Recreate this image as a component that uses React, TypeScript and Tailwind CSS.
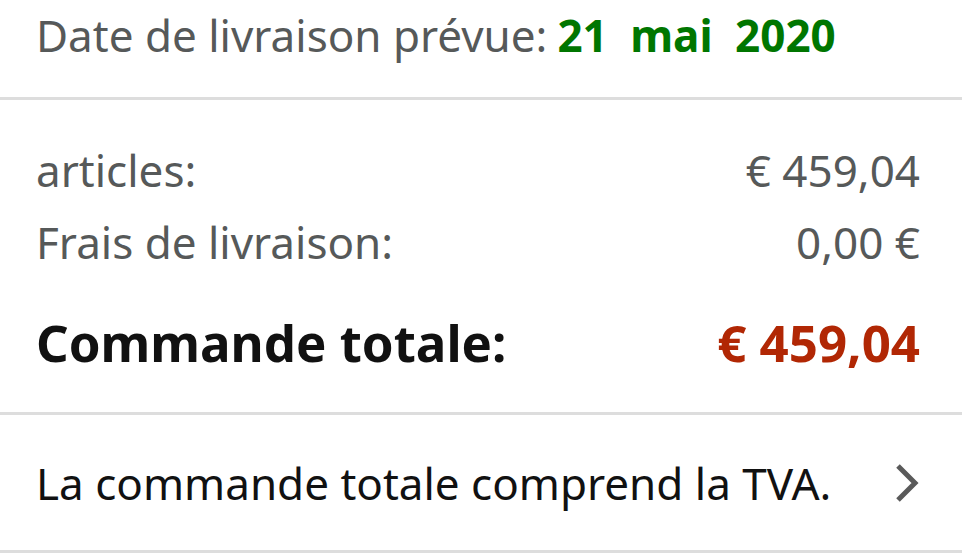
export default function App() {
  return (
    <div
      className="w-[962px] h-[553px] overflow-hidden bg-white"
      style={{ fontFamily: '"Noto Sans", "Open Sans", sans-serif' }}
    >
      <div className="h-[97px] flex items-center pb-[28px] px-[36px] text-[44px] text-[#565959]">
        <span>Date de livraison prévue:</span>
        <span className="ml-[10px] font-bold text-[#007600] [word-spacing:11px]">21 mai 2020</span>
      </div>
      <div className="h-[3px] bg-[#dddddd]" />

      <div className="h-[312px] flex flex-col px-[36px] pr-[42px] pt-[42px]">
        <div className="flex justify-between items-center h-[56px] text-[44px] text-[#565959]">
          <span>articles:</span>
          <span>€ 459,04</span>
        </div>
        <div className="flex justify-between items-center h-[56px] mt-[16px] text-[44px] text-[#565959]">
          <span>Frais de livraison:</span>
          <span>0,00 €</span>
        </div>
        <div className="flex justify-between items-center h-[64px] mt-[40px] text-[51px] font-bold">
          <span className="text-[#111111]">Commande totale:</span>
          <span className="text-[#b12704]">€ 459,04</span>
        </div>
      </div>
      <div className="h-[3px] bg-[#dddddd]" />

      <div className="h-[135px] flex items-center justify-between px-[36px] pr-[42px]">
        <span className="text-[44px] text-[#111111]">La commande totale comprend la TVA.</span>
        <svg width="26" height="40" viewBox="0 0 26 40">
          <path d="M4 3 L21 20 L4 37" fill="none" stroke="#5a5a5a" strokeWidth="5" />
        </svg>
      </div>
      <div className="h-[3px] bg-[#dddddd]" />
    </div>
  );
}
